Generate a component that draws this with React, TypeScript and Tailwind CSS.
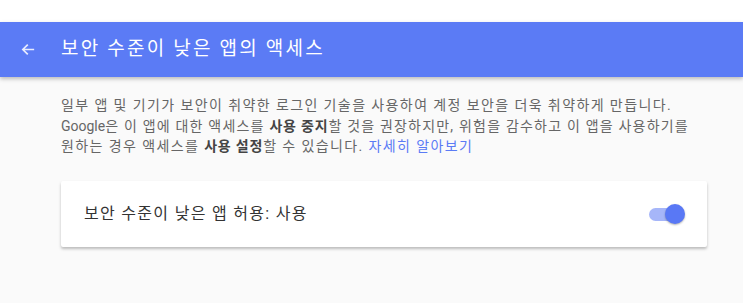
export default function App() {
  return (
    <div className="min-h-[303px] bg-[#fafafa] font-['Roboto','Noto_Sans_CJK_KR',sans-serif]">
      <div className="h-[22px] bg-white" />
      <header className="flex h-[55px] items-center bg-[#5b7bf5] shadow-[0_2px_4px_rgba(0,0,0,0.25)]">
        <svg className="ml-[20px] h-[17px] w-[17px]" viewBox="0 0 24 24" fill="none">
          <path d="M20 12H4.5M11 5l-7 7 7 7" stroke="#e8ecfd" strokeWidth="2.4" />
        </svg>
        <h1 className="ml-[24px] text-[19px] font-normal tracking-[2.2px] text-white">보안 수준이 낮은 앱의 액세스</h1>
      </header>

      <section className="px-[61px] pt-[18px]">
        <div className="whitespace-nowrap text-[14px] leading-[20.5px] text-[#666]">
          <p className="tracking-[1.4px]">일부 앱 및 기기가 보안이 취약한 로그인 기술을 사용하여 계정 보안을 더욱 취약하게 만듭니다.</p>
          <p className="tracking-[1.2px]">
            <span className="tracking-normal">Google</span>은 이 앱에 대한 액세스를 <b className="font-bold tracking-[0.8px] text-[#444]">사용 중지</b>할 것을 권장하지만, 위험을 감수하고 이 앱을 사용하기를
          </p>
          <p className="tracking-[1.4px]">
            원하는 경우 액세스를 <b className="font-bold tracking-[0.8px] text-[#444]">사용 설정</b>할 수 있습니다.{' '}
            <a className="text-[#5b7bf5]">자세히 알아보기</a>
          </p>
        </div>

        <div className="mt-[24px] flex h-[66px] w-[646px] items-center justify-between rounded-[2px] bg-white pl-[23px] pr-[22px] shadow-[0_2px_3px_rgba(0,0,0,0.25)]">
          <span className="text-[16px] tracking-[1.3px] text-[#333]">보안 수준이 낮은 앱 허용: 사용</span>
          <div className="relative h-[20px] w-[38px]">
            <div className="absolute left-[2px] top-[4px] h-[13px] w-[32px] rounded-full bg-[#a6b6f9]" />
            <div className="absolute right-[0px] top-0 h-[20px] w-[20px] rounded-full bg-[#5978f5] shadow-[0_1px_2px_rgba(0,0,0,0.3)]" />
          </div>
        </div>
      </section>
    </div>
  );
}
